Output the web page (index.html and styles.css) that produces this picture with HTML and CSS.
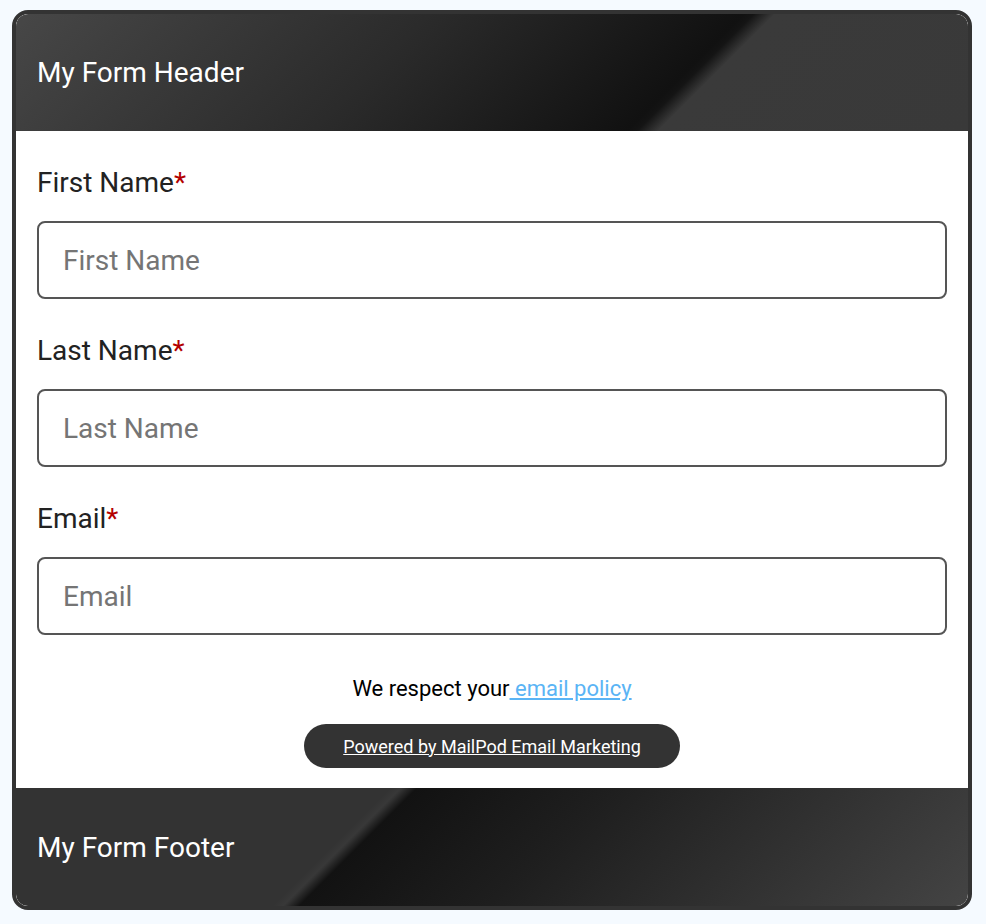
FILE: index.html
```html
<!DOCTYPE html>
<html>
<head>
<meta charset="utf-8">
<link rel="stylesheet" href="styles.css">
</head>
<body>
<div class="card">
  <div class="header">My Form Header</div>
  <form class="body">
    <div class="field">
      <label class="label">First Name<span class="req">*</span></label>
      <input class="input" type="text" placeholder="First Name">
    </div>
    <div class="field">
      <label class="label">Last Name<span class="req">*</span></label>
      <input class="input" type="text" placeholder="Last Name">
    </div>
    <div class="field field-last">
      <label class="label">Email<span class="req">*</span></label>
      <input class="input" type="text" placeholder="Email">
    </div>
    <p class="policy">We respect your<a href="#"> email policy</a></p>
    <div class="powered-wrap"><a class="powered" href="#">Powered by MailPod Email Marketing</a></div>
  </form>
  <div class="footer">My Form Footer</div>
</div>
</body>
</html>
```
FILE: styles.css
```css
html, body {
  margin: 0;
  padding: 0;
  background: #f5faff;
}
body {
  padding: 10px 14px 0 12px;
  font-family: Roboto, "Liberation Sans", sans-serif;
}
.card {
  width: 952px;
  border: 4px solid #333;
  border-radius: 16px;
  overflow: hidden;
  background: #fff;
}
.header {
  height: 117px;
  display: flex;
  align-items: center;
  padding-left: 21px;
  color: #fff;
  font-size: 28px;
  background: linear-gradient(135deg, #474747 0%, #2a2a2a 40%, #111 68%, #141414 69%, #3a3a3a 71%, #393939 100%);
  border-radius: 12px 12px 0 0;
}
.footer {
  height: 118px;
  display: flex;
  align-items: center;
  padding-left: 21px;
  color: #fff;
  font-size: 28px;
  background: linear-gradient(135deg, #333 0%, #333 35%, #383838 36%, #121212 37.5%, #1e1e1e 55%, #444 100%);
  border-radius: 0 0 12px 12px;
}
.body {
  margin: 0;
  padding: 37px 21px 20px 21px;
}
.field {
  margin-bottom: 37px;
}
.field-last {
  margin-bottom: 41px;
}
.label {
  display: block;
  font-size: 28px;
  line-height: 30px;
  color: #222;
  margin-bottom: 23px;
}
.req {
  color: #b30000;
}
.input {
  display: block;
  box-sizing: border-box;
  width: 100%;
  height: 78px;
  border: 2px solid #555;
  border-radius: 8px;
  padding: 0 24px;
  font-family: Roboto, "Liberation Sans", sans-serif;
  font-size: 28px;
  color: #222;
  outline: none;
}
.input::placeholder {
  color: #757575;
}
.policy {
  margin: 0;
  text-align: center;
  font-size: 22px;
  line-height: 26px;
  color: #000;
}
.policy a {
  color: #5ab4f5;
  text-decoration: underline;
}
.powered-wrap {
  display: flex;
  justify-content: center;
  margin-top: 22px;
}
.powered {
  display: flex;
  align-items: center;
  justify-content: center;
  width: 376px;
  height: 44px;
  border-radius: 22px;
  background: #333;
  color: #fff;
  font-size: 18px;
  text-decoration: underline;
}
```
